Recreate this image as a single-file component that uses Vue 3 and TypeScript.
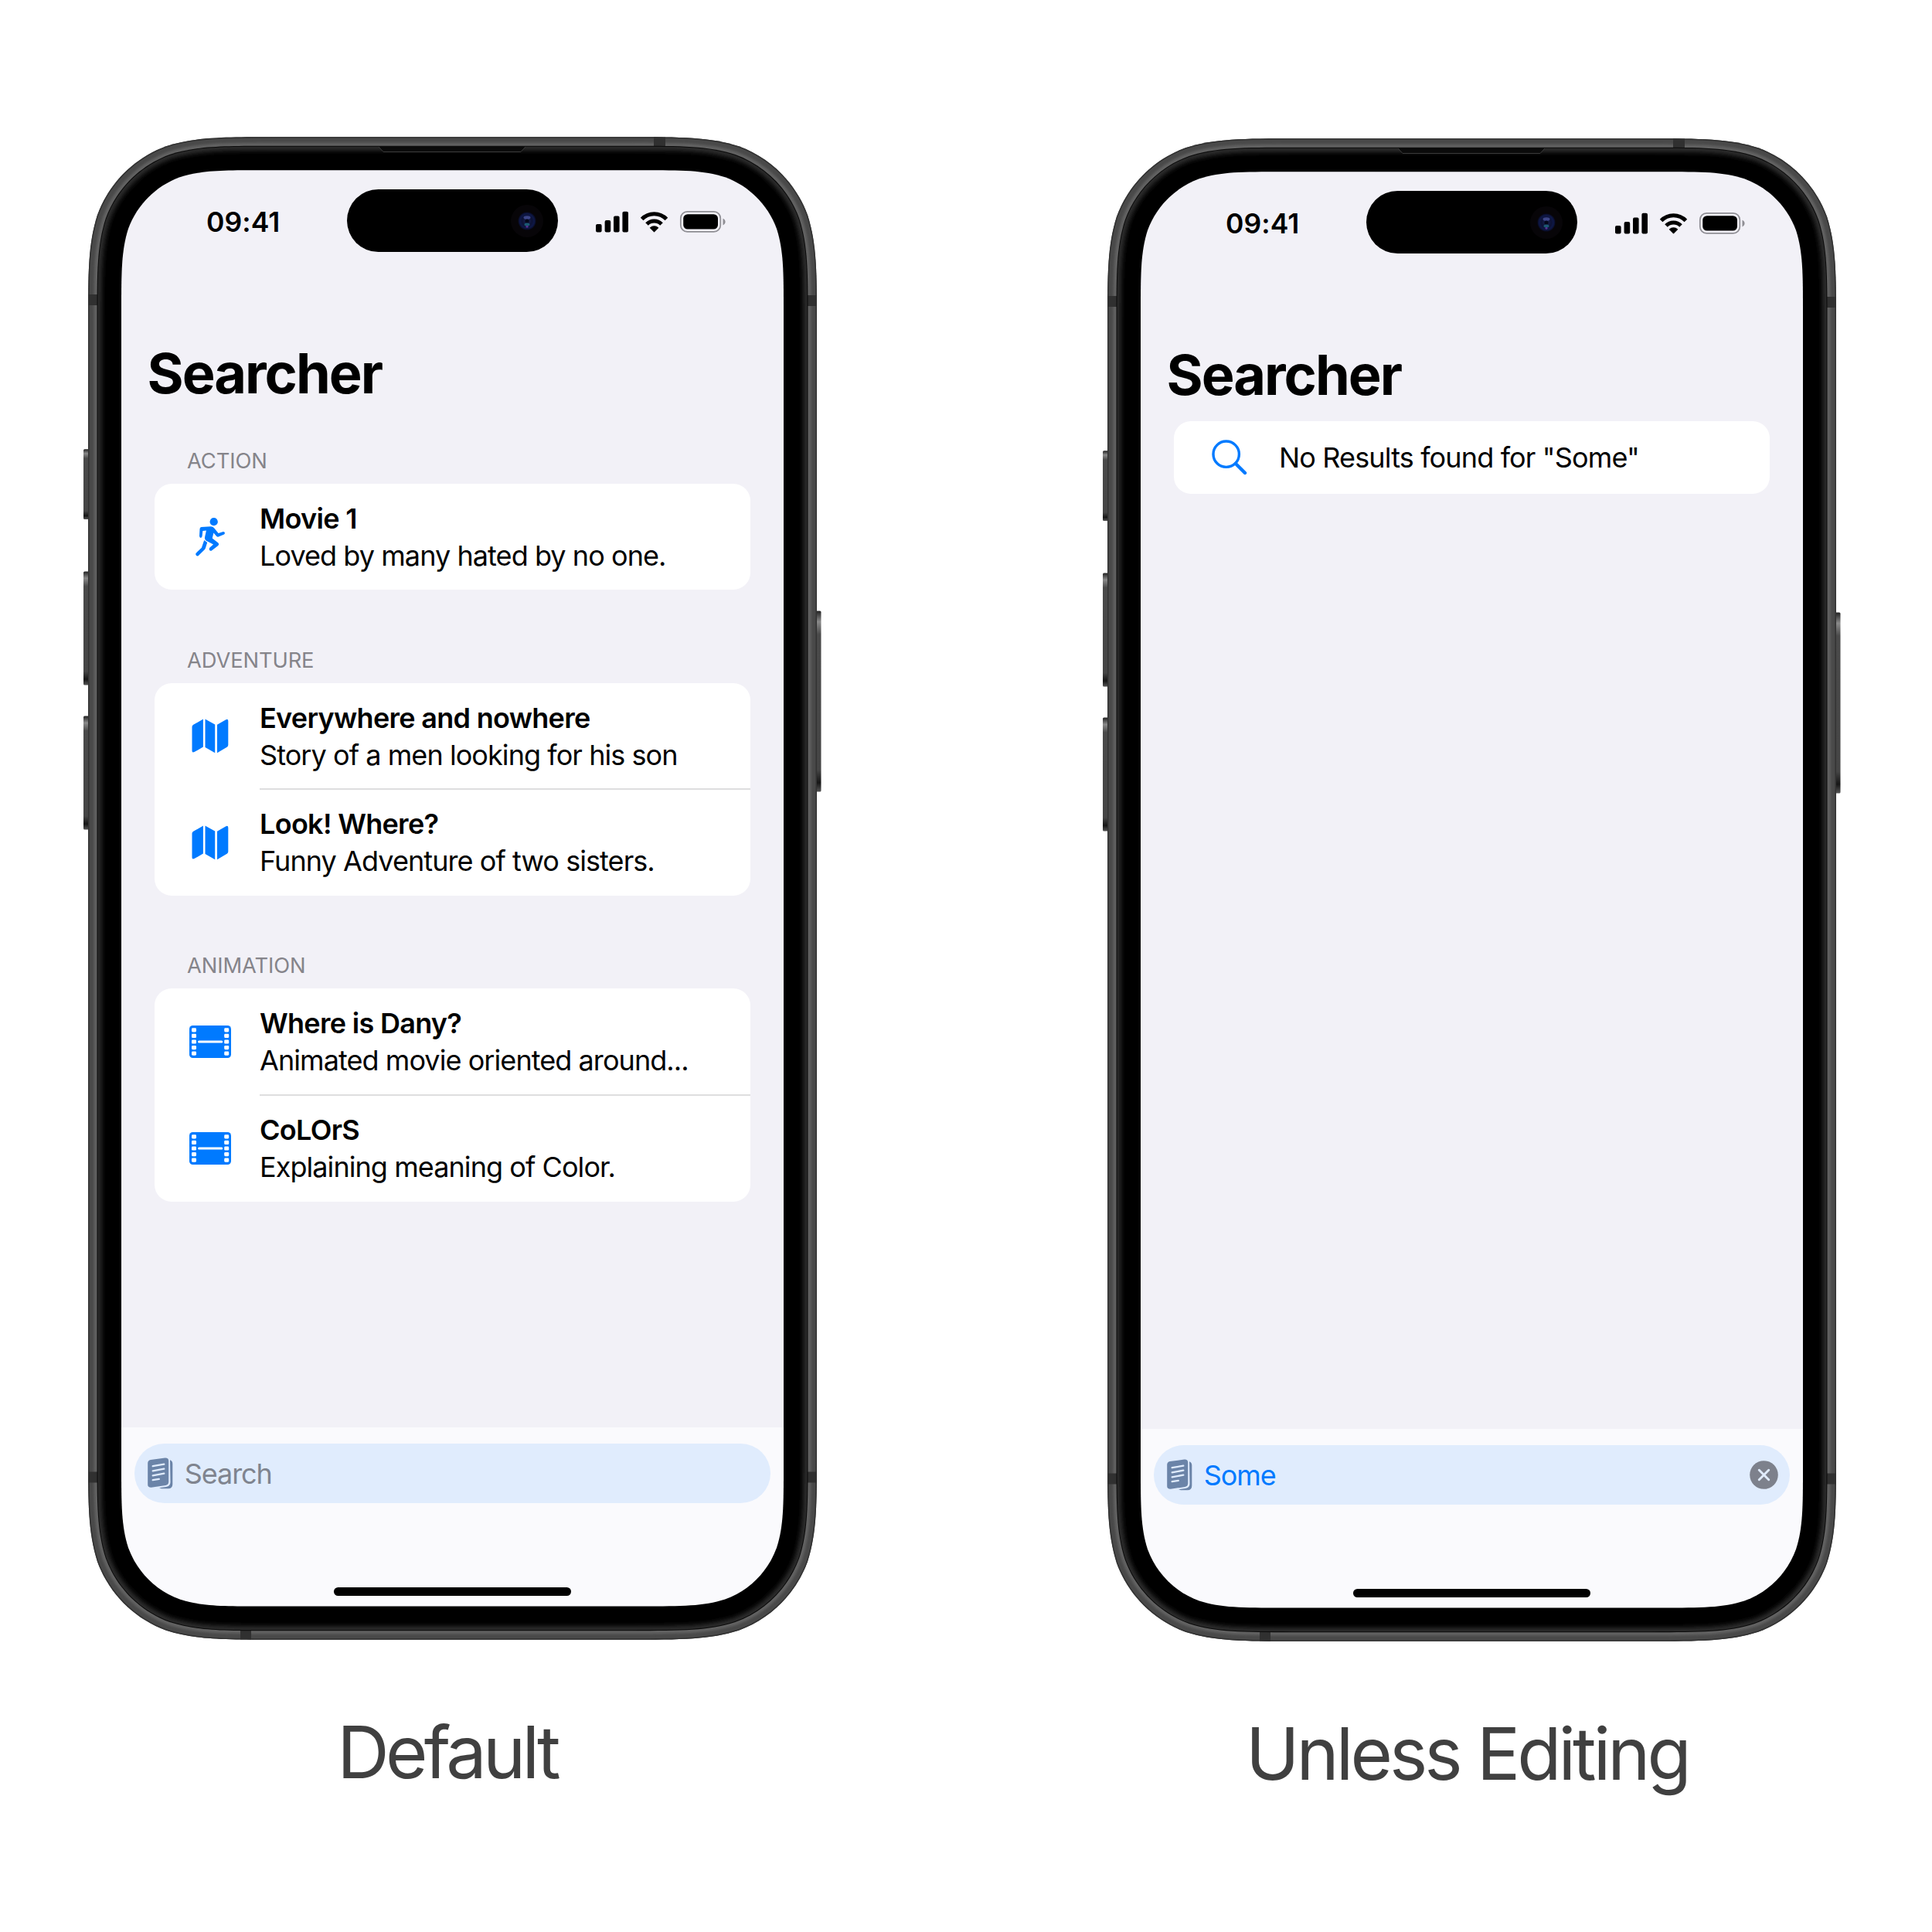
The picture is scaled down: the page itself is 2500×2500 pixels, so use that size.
<script setup lang="ts">
interface Movie { title: string; text: string; icon: 'run' | 'map' | 'film' }
interface Section { name: string; movies: Movie[] }
interface Phone { caption: string; sections: Section[]; query: string; cls: string }

const sections: Section[] = [
  { name: 'ACTION', movies: [{ title: 'Movie 1', text: 'Loved by many hated by no one.', icon: 'run' }] },
  {
    name: 'ADVENTURE',
    movies: [
      { title: 'Everywhere and nowhere', text: 'Story of a men looking for his son', icon: 'map' },
      { title: 'Look! Where?', text: 'Funny Adventure of two sisters.', icon: 'map' },
    ],
  },
  {
    name: 'ANIMATION',
    movies: [
      { title: 'Where is Dany?', text: 'Animated movie oriented around...', icon: 'film' },
      { title: 'CoLOrS', text: 'Explaining meaning of Color.', icon: 'film' },
    ],
  },
]

const phones: Phone[] = [
  { caption: 'Default', sections, query: '', cls: 'first' },
  { caption: 'Unless Editing', sections: [], query: 'Some', cls: 'second' },
]

// Rectangle with continuous-curvature corners.
function squircle(x: number, y: number, w: number, h: number, r: number): string {
  const c = [
    [1.52866, 0], [1.08849, 0], [0.86841, 0], [0.63149, 0.07491],
    [0.37282, 0.16906], [0.16906, 0.37282], [0.07491, 0.63149],
    [0, 0.86841], [0, 1.08849], [0, 1.52866],
  ]
  const corner = (cx: number, cy: number, sx: number, sy: number, flip: boolean) => {
    const pts = (flip ? [...c].reverse() : c).map(([a, b]) => `${(cx + sx * a * r).toFixed(2)} ${(cy + sy * b * r).toFixed(2)}`)
    return `${pts[0]}C${pts.slice(1).join(' ')}`
  }
  return (
    'M' + corner(x + w, y, -1, 1, false) +
    'L' + corner(x + w, y + h, -1, -1, true) +
    'L' + corner(x, y + h, 1, -1, false) +
    'L' + corner(x, y, 1, 1, true) + 'Z'
  )
}

const screenHole = squircle(43, 43.3, 857, 1858.3, 120)
const body = squircle(0, 0.3, 943, 1944.4, 160)
const rim = squircle(11.5, 11.8, 920, 1921.4, 149)
const glass = squircle(12.5, 12.8, 918, 1919.4, 148)
const holes = Array.from({ length: 5 }, (_, i) => i)
</script>

<template>
  <main class="stage">
    <figure v-for="p in phones" :key="p.caption" class="col" :class="p.cls">
      <div class="phone">
        <div class="screen">
          <header class="status">
            <span class="time">09:41</span>
            <span class="island">
              <svg width="42" height="42" viewBox="0 0 42 42">
                <defs>
                  <radialGradient :id="'lens' + p.cls">
                    <stop offset="0" stop-color="#1c2658" />
                    <stop offset=".55" stop-color="#0d1234" />
                    <stop offset=".8" stop-color="#0e1848" />
                    <stop offset="1" stop-color="#080a20" />
                  </radialGradient>
                </defs>
                <circle cx="21" cy="21" r="21" fill="#070508" />
                <circle cx="21" cy="21" r="11.5" :fill="`url(#lens${p.cls})`" />
                <ellipse cx="21" cy="16.5" rx="4.5" ry="2.3" fill="#5560b0" opacity=".65" />
                <circle cx="21" cy="21" r="2.6" fill="#05071a" />
                <ellipse cx="21" cy="25.5" rx="3.5" ry="2" fill="#1f6f86" opacity=".75" />
                <circle cx="21" cy="28.2" r="1.5" fill="#6a35a8" opacity=".8" />
              </svg>
            </span>
            <svg class="indicators" width="170" height="28" viewBox="0 0 170 28">
              <rect x="0" y="17" width="7.6" height="10.5" rx="2" />
              <rect x="11.6" y="12" width="7.6" height="15.5" rx="2" />
              <rect x="23" y="6.6" width="7.6" height="20.9" rx="2" />
              <rect x="34.4" y="0.8" width="7.6" height="26.7" rx="2" />
              <g fill="none" stroke="#000" stroke-width="5">
                <path d="M59.6 10.6A22 22 0 0 1 91.4 10.6" />
                <path d="M66 17.1A13.2 13.2 0 0 1 85 17.1" />
              </g>
              <path d="M75.5 27.3L70 21.8A8 8 0 0 1 81 21.8Z" stroke="#000" stroke-width=".6" stroke-linejoin="round" />
              <rect x="109.8" y="0.9" width="51.5" height="26" rx="8.5" fill="none" stroke="#8f8e94" stroke-width="1.7" />
              <rect x="113.2" y="4.2" width="44.8" height="19.4" rx="5.6" />
              <path d="M164.5 9.8C168.6 11.4 168.6 16.8 164.5 18.4Z" fill="#8f8e94" />
            </svg>
          </header>

          <h1 class="title">Searcher</h1>

          <div class="content">
            <section v-for="s in p.sections" :key="s.name" class="section">
              <h2 class="section-name">{{ s.name }}</h2>
              <ul class="card">
                <li v-for="m in s.movies" :key="m.title" class="row">
                  <span class="icon">
                    <svg v-if="m.icon === 'run'" width="38" height="50" viewBox="0 0 38 50">
                      <circle cx="23.7" cy="5.2" r="5.1" />
                      <path d="M7.5 11.9Q5.6 12.3 5.5 14.5L5 23.6Q5.1 25.9 6.8 25.9Q8.3 25.9 8.6 23.8L9.3 16.9L13.9 16.5L12 25.3Q11.6 28 13.5 29.5L23 34.6L18.5 38.4Q17.2 39.9 18 41.7Q19.2 43.5 21.2 42.2L29 36.3Q31 34.4 29.4 32.4L21.7 26.5L23.4 19.6L27 23.7Q28.2 25 29.8 24.6L36.5 21.8Q38.3 20.9 37.8 19.3Q37.1 17.6 35 18.2L29.6 20L24.3 13.4Q22.6 11.2 19.6 11.2Z" />
                      <path d="M11.2 29L15.2 32L12.8 39.5Q12.3 40.8 11.2 41.8L3.8 48.9Q2.3 50 .9 48.7Q-.5 47.1 .9 45.4L7.9 38.7Z" />
                    </svg>
                    <svg v-else-if="m.icon === 'map'" width="48" height="45" viewBox="0 0 48 45">
                      <path d="M.5 10.5Q.5 8.7 2.2 7.8L14.9 .6V36.5L3.5 43.1Q.5 44.5 .5 41.5Z" />
                      <path d="M17.5 .5L30.2 7.6V44.2L17.5 37Z" />
                      <path d="M33 7.7L44.3 1.2Q47.3 0 47.3 3V33.9Q47.3 35.7 45.7 36.7L33 44.2Z" />
                    </svg>
                    <svg v-else width="54" height="42" viewBox="0 0 54 42">
                      <rect width="54" height="42" rx="4.5" />
                      <g fill="#fff">
                        <template v-for="i in holes" :key="i">
                          <rect x="3" :y="3.3 + i * 7.55" width="6" height="5.2" rx="1.4" />
                          <rect x="45.2" :y="3.3 + i * 7.55" width="6" height="5.2" rx="1.4" />
                        </template>
                        <rect x="11" y="19.5" width="32.3" height="3" rx="1.5" />
                      </g>
                    </svg>
                  </span>
                  <div class="texts">
                    <strong class="name">{{ m.title }}</strong>
                    <span class="desc">{{ m.text }}</span>
                  </div>
                </li>
              </ul>
            </section>
            <div v-if="p.query" class="card empty">
              <span class="icon">
                <svg width="46" height="46" viewBox="0 0 46 46" fill="none" stroke="#007aff">
                  <circle cx="18.7" cy="18.7" r="16.7" stroke-width="3.4" />
                  <path d="M31 31L43 43" stroke-width="4.4" stroke-linecap="round" />
                </svg>
              </span>
              <span class="message">No Results found for "{{ p.query }}"</span>
            </div>
          </div>

          <footer class="bottom">
            <div class="search">
              <svg width="33" height="41" viewBox="0 0 33 41" fill="#6b84a8">
                <path d="M29 3.2Q32.3 4.5 32.3 8V34.5Q32.3 40.3 26.5 40.3H18L15 39.3L24 38Q29.5 37 29.5 32Z" />
                <path d="M4 3L22.5 .5Q27.2 .2 27.2 4.5V31.5Q27.2 35 23.5 36L4.8 38.8Q.2 39 .2 35V7.5Q.2 3.7 4 3Z" />
                <path d="M6.7 11.2L21.3 8.6M6.7 17.3L21.3 14.7M6.7 23.3L21.3 20.7M6.7 29.2L14.8 27.9" stroke="#e0ecfd" stroke-width="2.3" stroke-linecap="round" />
              </svg>
              <span class="field" :class="{ filled: p.query }">{{ p.query || 'Search' }}</span>
              <svg v-if="p.query" width="37" height="37" viewBox="0 0 37 37">
                <circle cx="18.5" cy="18.5" r="18.3" fill="#7d818c" />
                <path d="M12.3 12.3L24.7 24.7M24.7 12.3L12.3 24.7" stroke="#e0ecfd" stroke-width="2.9" stroke-linecap="round" />
              </svg>
            </div>
            <div class="home"></div>
          </footer>
        </div>

        <svg class="frame" width="957" height="1945" viewBox="-7 0 957 1945">
          <defs>
            <linearGradient :id="'btn' + p.cls" x1="0" x2="0" y1="0" y2="1">
              <stop offset="0" stop-color="#222" />
              <stop offset=".06" stop-color="#8a8a8a" />
              <stop offset=".13" stop-color="#4a4a4a" />
              <stop offset=".88" stop-color="#454545" />
              <stop offset=".95" stop-color="#161616" />
              <stop offset="1" stop-color="#555" />
            </linearGradient>
            <clipPath :id="'glass' + p.cls"><path :d="glass" /></clipPath>
            <clipPath :id="'body' + p.cls"><path :d="body" /></clipPath>
            <filter :id="'soft' + p.cls" x="-5%" y="-5%" width="110%" height="110%"><feGaussianBlur stdDeviation="3" /></filter>
            <filter :id="'fine' + p.cls" x="-5%" y="-5%" width="110%" height="110%"><feGaussianBlur stdDeviation="1.8" /></filter>
            <mask :id="'hole' + p.cls" maskUnits="userSpaceOnUse" x="-7" y="0" width="957" height="1945">
              <rect x="-7" width="957" height="1945" fill="#fff" />
              <path :d="screenHole" fill="#000" />
            </mask>
          </defs>
          <g :fill="`url(#btn${p.cls})`">
            <rect x="-6" y="404.3" width="9" height="90.7" rx="1.5" />
            <rect x="-6" y="562.4" width="9" height="147" rx="1.5" />
            <rect x="-6" y="749.6" width="9" height="147" rx="1.5" />
            <rect x="940" y="613.5" width="8.5" height="234" rx="1.5" />
          </g>
          <g :mask="`url(#hole${p.cls})`">
            <path :d="body" fill="#494949" />
            <g :clip-path="`url(#body${p.cls})`">
              <path :d="body" fill="none" stroke="#333" stroke-width="3" />
              <path :d="rim" fill="none" stroke="#626262" stroke-width="8" :filter="`url(#fine${p.cls})`" />
              <g fill="#303030">
                <rect x="0" y="204" width="14" height="14" />
                <rect x="929" y="205" width="14" height="14" />
                <rect x="0" y="1727.5" width="14" height="14" />
                <rect x="929" y="1727.5" width="14" height="14" />
                <rect x="732" y="0" width="15" height="14" />
                <rect x="197" y="1931" width="14" height="14" />
              </g>
            </g>
            <path :d="rim" fill="#0a0a0a" />
            <path :d="glass" fill="#000" />
            <g :clip-path="`url(#glass${p.cls})`">
              <path :d="glass" fill="none" stroke="#323232" stroke-width="9" :filter="`url(#soft${p.cls})`" />
              <path d="M376 12H566L560 19.5H382Z" fill="#0b0b0b" />
              <path d="M376 13L382 19.5H560L566 13" fill="none" stroke="#3a3a3a" stroke-width="1" />
            </g>
          </g>
        </svg>
      </div>
      <figcaption class="caption">{{ p.caption }}</figcaption>
    </figure>
  </main>
</template>

<style>
body {
  margin: 0;
  background: #fff;
}
</style>

<style scoped>
.stage {
  box-sizing: border-box;
  width: 2500px;
  height: 2500px;
  padding: 177px 0 0 114px;
  display: flex;
  align-items: flex-start;
  gap: 376px;
  background: #fff;
  overflow: hidden;
  font-family: Inter, "Liberation Sans", sans-serif;
  color: #000;
}
.col {
  margin: 0;
  width: 943px;
  display: flex;
  flex-direction: column;
  align-items: center;
}
.second {
  margin-top: 2.4px;
}
.phone {
  position: relative;
  box-sizing: border-box;
  width: 943px;
  height: 1945px;
  padding: 43px;
}
.frame {
  position: absolute;
  left: -7px;
  top: 0;
}
.screen {
  width: 857px;
  height: 1859px;
  border-radius: 90px;
  overflow: hidden;
  background: #f2f1f7;
  display: flex;
  flex-direction: column;
}
.status {
  height: 106px;
  padding: 25px 0 0 109px;
  box-sizing: border-box;
  display: flex;
  align-items: flex-start;
}
.time {
  box-sizing: border-box;
  width: 183px;
  padding: 21px 0 0 1px;
  font-size: 35.5px;
  line-height: 44px;
  font-weight: 600;
  letter-spacing: 0.1px;
}
.island {
  width: 273px;
  height: 81px;
  box-sizing: border-box;
  padding-right: 19px;
  border-radius: 41px;
  background: #000;
  display: flex;
  align-items: center;
  justify-content: flex-end;
}
.indicators {
  margin: 28px 0 0 49px;
}
.title {
  margin: 112px 0 0 33.5px;
  font-size: 72px;
  line-height: 90px;
  height: 90px;
  font-weight: 700;
  letter-spacing: -2px;
}
.content {
  flex: 1;
  padding: 14.6px 43px 0;
}
.section {
  padding-top: 15.1px;
}
.section + .section {
  padding-top: 52.3px;
}
.section-name {
  margin: 0;
  padding: 21px 0 0 42px;
  height: 68px;
  box-sizing: border-box;
  font-size: 27.3px;
  line-height: 36px;
  font-weight: 400;
  letter-spacing: -0.1px;
  color: #85848a;
}
.card {
  margin: 0;
  padding: 0;
  list-style: none;
  background: #fff;
  border-radius: 22px;
}
.row {
  position: relative;
  height: 137.7px;
  display: flex;
  align-items: center;
}
.row + .row::before {
  content: "";
  position: absolute;
  left: 136px;
  right: 0;
  top: -1px;
  height: 2px;
  background: #dededf;
}
.icon {
  width: 136px;
  padding-left: 8px;
  box-sizing: border-box;
  display: flex;
  justify-content: center;
  fill: #007aff;
}
.texts {
  display: flex;
  flex-direction: column;
  white-space: nowrap;
}
.name,
.desc,
.message {
  font-size: 36px;
  line-height: 48px;
}
.name {
  font-weight: 600;
  letter-spacing: -0.7px;
}
.desc {
  letter-spacing: -0.93px;
}
.message {
  letter-spacing: -0.85px;
}
.empty {
  height: 93.7px;
  display: flex;
  align-items: center;
}
.bottom {
  height: 232px;
  box-sizing: border-box;
  padding: 21px 17px 0;
  background: #fafafd;
  display: flex;
  flex-direction: column;
  align-items: center;
}
.search {
  box-sizing: border-box;
  width: 823px;
  height: 77px;
  padding: 0 15px 0 17px;
  border-radius: 39px;
  background: #e0ecfd;
  display: flex;
  align-items: center;
}
.field {
  margin-left: 14.8px;
  flex: 1;
  font-size: 36px;
  line-height: 48px;
  letter-spacing: -1.1px;
  color: #7f848f;
}
.filled {
  color: #007aff;
}
.home {
  width: 307px;
  height: 11px;
  margin-top: 109px;
  border-radius: 6px;
  background: #000;
}
.caption {
  margin-top: 85px;
  padding-right: 14px;
  font-size: 93.5px;
  line-height: 120px;
  color: #404040;
  letter-spacing: -4.7px;
  white-space: nowrap;
}
.second .caption {
  letter-spacing: -4px;
  padding-right: 12px;
}
</style>
